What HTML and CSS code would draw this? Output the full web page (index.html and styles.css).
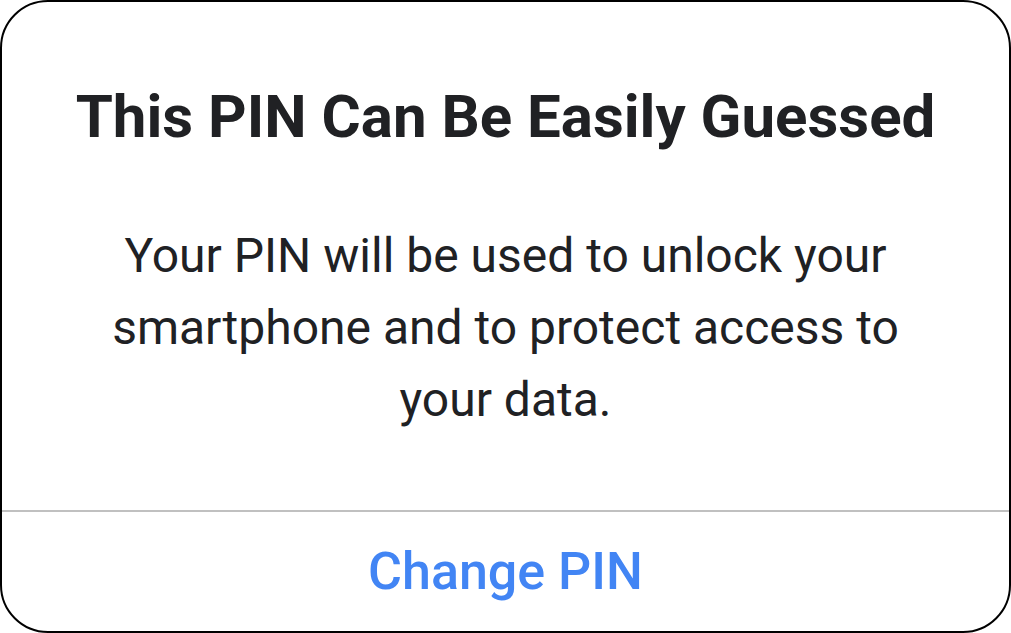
FILE: index.html
```html
<!DOCTYPE html>
<html lang="en">
<head>
    <meta charset="UTF-8">
    <meta name="viewport" content="width=device-width, initial-scale=1.0">
    <title>This PIN Can Be Easily Guessed</title>
    <link rel="stylesheet" href="styles.css">
</head>
<body>
    <div class="dialog">
        <div class="dialog-content">
            <h1 class="dialog-title">This PIN Can Be Easily Guessed</h1>
            <p class="dialog-message">Your PIN will be used to unlock your smartphone and to protect access to your data.</p>
        </div>
        <div class="dialog-actions">
            <button class="action-button">Change PIN</button>
        </div>
    </div>
</body>
</html>
```

FILE: styles.css
```css
html, body {
    margin: 0;
    padding: 0;
    background-color: #fff;
}
body {
    font-family: Roboto, "Noto Sans", sans-serif;
    color: #202124;
}
.dialog {
    box-sizing: border-box;
    width: 1011px;
    height: 633px;
    border: 2px solid #000;
    border-radius: 48px;
    background-color: #fff;
    display: flex;
    flex-direction: column;
    overflow: hidden;
}
.dialog-content {
    flex: 1;
    padding: 79px 20px 0;
    text-align: center;
}
.dialog-title {
    margin: 0;
    font-size: 60px;
    line-height: 72px;
    font-weight: 700;
    white-space: nowrap;
}
.dialog-message {
    margin: 67px auto 0;
    max-width: 800px;
    font-size: 48px;
    line-height: 72px;
    font-weight: 400;
}
.dialog-actions {
    height: 119px;
    border-top: 2px solid #c0c0c0;
    display: flex;
    align-items: center;
    justify-content: center;
}
.action-button {
    background: none;
    border: none;
    padding: 0;
    font-family: inherit;
    font-size: 52px;
    font-weight: 500;
    color: #4285f4;
    cursor: pointer;
}
```
